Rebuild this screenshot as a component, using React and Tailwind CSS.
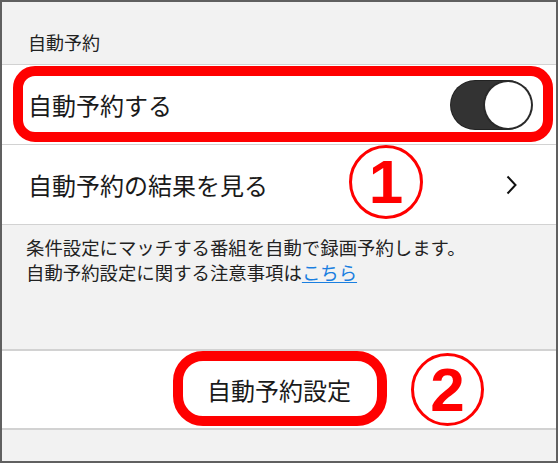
import { useState } from "react";

const jp = { fontFamily: '"Noto Sans CJK JP", "Noto Sans", sans-serif' };

function Toggle({ on, onChange }) {
  return (
    <button
      onClick={() => onChange(!on)}
      className={
        on
          ? "relative h-[48px] w-[80px] rounded-full bg-[#333333] ring-1 ring-[#222]"
          : "relative h-[48px] w-[80px] rounded-full bg-[#e5e5e5] ring-1 ring-[#ccc]"
      }
    >
      <span
        className={
          on
            ? "absolute right-0 top-[1px] h-[46px] w-[46px] rounded-full bg-white ring-2 ring-[#2a2a2a]"
            : "absolute left-0 top-[1px] h-[46px] w-[46px] rounded-full bg-white ring-2 ring-[#bbb]"
        }
      />
    </button>
  );
}

function CircledNum({ n, className }) {
  return (
    <div
      className={
        "pointer-events-none absolute flex items-center justify-center rounded-full border-[3px] border-[#ff0000] " +
        className
      }
    >
      <span
        className="text-[62px] font-bold leading-none text-[#ff0000]"
        style={{ fontFamily: '"Liberation Sans", Arial, sans-serif' }}
      >
        {n}
      </span>
    </div>
  );
}

export default function App() {
  const [auto, setAuto] = useState(true);

  return (
    <div
      className="flex h-[463px] w-[558px] flex-col border-2 border-[#606060] bg-[#f2f2f2] text-[#1a1a1a]"
      style={jp}
    >
      {/* section header */}
      <div className="h-[62px] pl-[26px] pt-[28px] text-[18px] leading-[24px] text-[#222]">
        自動予約
      </div>

      {/* toggle row */}
      <div className="relative flex h-[80px] items-center justify-between border-t border-[#d2d2d2] bg-white pl-[26px] pr-[25px]">
        <span className="text-[24px] leading-none">自動予約する</span>
        <Toggle on={auto} onChange={setAuto} />
        <div className="pointer-events-none absolute bottom-[2px] left-[11px] right-[3px] top-[1px] rounded-[22px] border-[10px] border-[#ff0000]" />
      </div>

      {/* results row */}
      <div className="relative flex h-[80px] items-center justify-between border-t border-[#d2d2d2] bg-white pl-[26px] pr-[39px]">
        <span className="text-[24px] leading-none">自動予約の結果を見る</span>
        <svg width="11" height="20" viewBox="0 0 11 20" fill="none">
          <path d="M1.5 1.5 L9.5 10 L1.5 18.5" stroke="#111" strokeWidth="2" />
        </svg>
        <CircledNum n="1" className="left-[347px] top-0 h-[74px] w-[74px]" />
      </div>

      {/* description */}
      <div className="h-[125px] border-t border-[#d2d2d2] pl-[24px] pt-[10px] text-[18.4px] leading-[25px] text-[#222]">
        <p>条件設定にマッチする番組を自動で録画予約します。</p>
        <p>
          自動予約設定に関する注意事項は
          <a href="#" className="text-[#1a7fe0] underline underline-offset-2">
            こちら
          </a>
        </p>
      </div>

      {/* button row */}
      <div className="relative flex h-[81px] items-center justify-center border-y-2 border-[#d2d2d2] bg-white">
        <button className="text-[24px] leading-none">自動予約設定</button>
        <div className="pointer-events-none absolute left-[171px] top-0 h-[75px] w-[214px] rounded-[30px] border-[10px] border-[#ff0000]" />
        <CircledNum n="2" className="left-[409px] top-[2px] h-[73px] w-[73px]" />
      </div>

      <div className="flex-1" />
    </div>
  );
}
